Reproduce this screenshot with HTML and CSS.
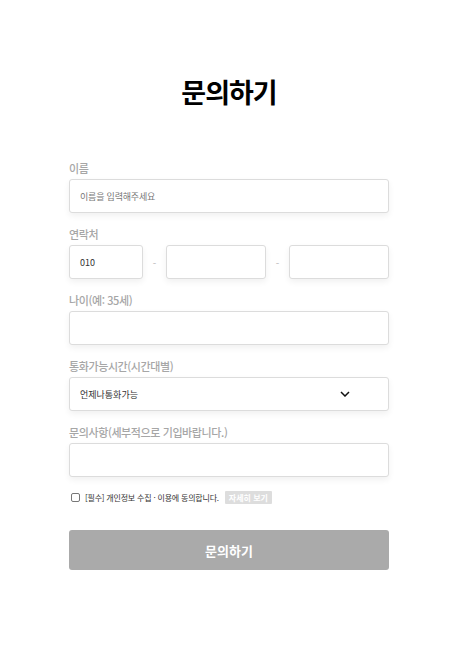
FILE: index.html
```html
<!DOCTYPE html>
<html lang="ko">
<head>
<meta charset="utf-8">
<link rel="stylesheet" href="styles.css">
</head>
<body>
<div class="page">
  <form class="form">
    <h1 class="title">문의하기</h1>
    <div class="field">
      <label class="label">이름</label>
      <div class="box"><span class="placeholder">이름을 입력해주세요</span></div>
    </div>
    <div class="field">
      <label class="label">연락처</label>
      <div class="phone">
        <div class="box"><span class="value">010</span></div>
        <span class="dash">-</span>
        <div class="box"></div>
        <span class="dash">-</span>
        <div class="box"></div>
      </div>
    </div>
    <div class="field">
      <label class="label">나이(예: 35세)</label>
      <div class="box"></div>
    </div>
    <div class="field">
      <label class="label">통화가능시간(시간대별)</label>
      <div class="box select">
        <span class="value">언제나통화가능</span>
        <svg class="chev" width="10" height="6" viewBox="0 0 10 6"><path d="M1 1 L5 5 L9 1" fill="none" stroke="#111" stroke-width="1.5"/></svg>
      </div>
    </div>
    <div class="field">
      <label class="label">문의사항(세부적으로 기입바랍니다.)</label>
      <div class="box"></div>
    </div>
    <div class="agree">
      <span class="check"></span>
      <span class="agree-text">[필수] 개인정보 수집 · 이용에 동의합니다.</span>
      <span class="more">자세히 보기</span>
    </div>
    <div class="submit">문의하기</div>
  </form>
</div>
</body>
</html>
```
FILE: styles.css
```css
html, body {
  margin: 0;
  padding: 0;
  background: #fff;
}
body {
  font-family: "Noto Sans CJK KR", "Noto Sans", sans-serif;
}
.page {
  padding: 74px 0 0 8px;
}
.form {
  width: 320px;
  margin: 0 auto;
  display: flex;
  flex-direction: column;
}
.title {
  margin: 0 0 51px;
  text-align: center;
  font-size: 27px;
  line-height: 36px;
  font-weight: 700;
  color: #000;
  letter-spacing: -1px;
}
.field {
  display: flex;
  flex-direction: column;
  gap: 4px;
  margin-bottom: 14px;
}
.label {
  font-size: 11px;
  line-height: 14px;
  font-weight: 500;
  color: #a6a6a6;
  letter-spacing: -0.4px;
}
.box {
  height: 34px;
  box-sizing: border-box;
  border: 1px solid #dcdcdc;
  border-radius: 3px;
  background: #fff;
  box-shadow: 0 3px 6px rgba(0, 0, 0, 0.06);
  display: flex;
  align-items: center;
  padding: 0 10px;
}
.placeholder {
  font-size: 9px;
  color: #777;
  letter-spacing: -0.2px;
}
.value {
  font-size: 9px;
  color: #333;
}
.phone {
  display: grid;
  grid-template-columns: 74px 23px 1fr 23px 1fr;
  align-items: center;
}
.dash {
  text-align: center;
  font-size: 10px;
  color: #bbb;
}
.select {
  justify-content: space-between;
  padding-right: 38px;
}
.chev {
  display: block;
}
.agree {
  display: flex;
  align-items: center;
  margin-top: -1px;
  height: 14px;
}
.check {
  width: 7px;
  height: 7px;
  border: 1px solid #777;
  border-radius: 2px;
  margin: 0 5px 0 2px;
}
.agree-text {
  font-size: 8px;
  color: #333;
  letter-spacing: -0.2px;
}
.more {
  margin-left: 6px;
  background: #ddd;
  color: #fff;
  font-size: 8px;
  font-weight: 700;
  height: 13px;
  line-height: 13px;
  padding: 0 4px;
  border-radius: 1px;
}
.submit {
  margin-top: 26px;
  height: 40px;
  border-radius: 3px;
  background: #aaa;
  color: #fff;
  font-size: 13px;
  font-weight: 700;
  display: flex;
  align-items: center;
  justify-content: center;
}
```
